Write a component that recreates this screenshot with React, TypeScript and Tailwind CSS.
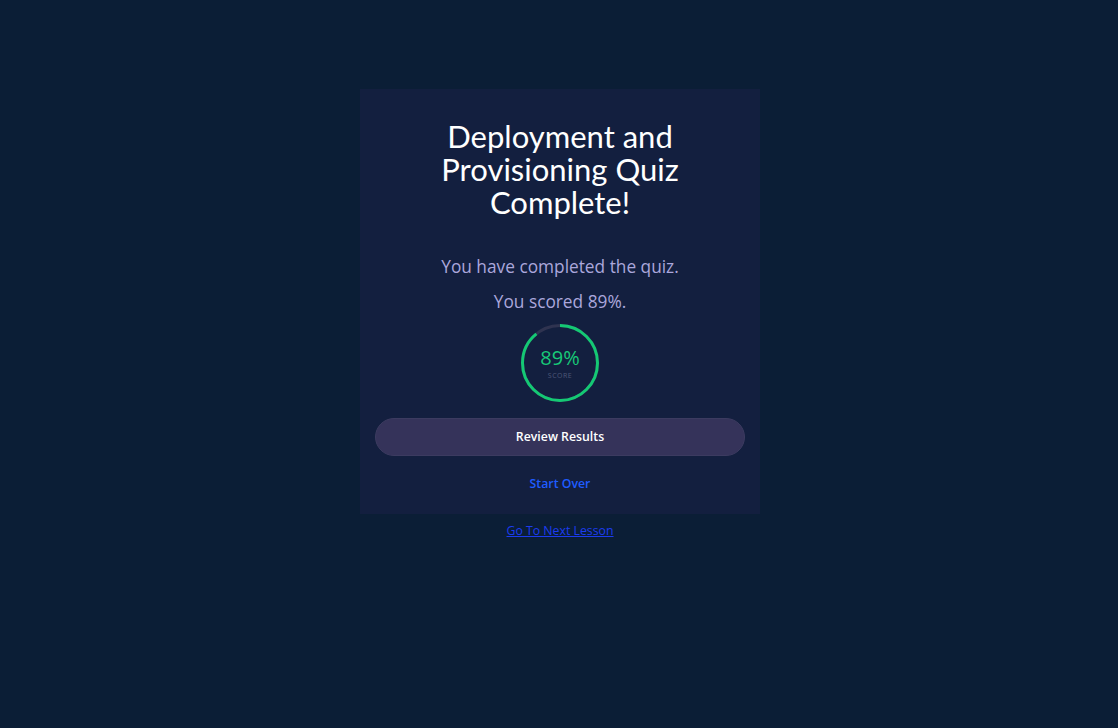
import React from "react";

const ScoreRing: React.FC<{ value: number }> = ({ value }) => {
  const r = 37.5;
  const c = 2 * Math.PI * r;
  return (
    <div className="relative w-[80px] h-[80px]">
      <svg width="80" height="80" viewBox="0 0 80 80" className="-rotate-90">
        <circle cx="40" cy="40" r={r} fill="none" stroke="#2f3350" strokeWidth="3" />
        <circle
          cx="40"
          cy="40"
          r={r}
          fill="none"
          stroke="#14c974"
          strokeWidth="3"
          strokeDasharray={`${(c * value) / 100} ${c}`}
        />
      </svg>
      <div className="absolute inset-0 flex flex-col items-center justify-center">
        <span className="text-[20px] leading-[22px] text-[#18c978] mt-[1px]">{value}%</span>
        <span className="text-[7px] leading-[10px] tracking-[0.5px] text-[#4e5878] mt-[2px]">SCORE</span>
      </div>
    </div>
  );
};

export default function App() {
  return (
    <div
      className="min-h-screen w-full bg-[#0b1e36] flex flex-col items-center pt-[89px] pl-[2px]"
      style={{ fontFamily: '"Open Sans", "Noto Sans", sans-serif' }}
    >
      <div className="w-[400px] bg-[#131f3f] flex flex-col items-center px-[15px] pt-[31px] pb-[20px]">
        <h1
          className="max-w-[270px] text-center text-white text-[31px] leading-[33px] font-normal"
          style={{ fontFamily: 'Lato, "Open Sans", sans-serif' }}
        >
          Deployment and Provisioning Quiz Complete!
        </h1>
        <p className="mt-[34px] text-[17.3px] leading-[27px] text-[#aba7dc]">You have completed the quiz.</p>
        <p className="mt-[8px] text-[17.3px] leading-[27px] text-[#aba7dc]">You scored 89%.</p>
        <div className="mt-[8px]">
          <ScoreRing value={89} />
        </div>
        <button className="mt-[15px] w-full h-[38px] rounded-full bg-[#35335a] border border-[#3c3b60] text-white text-[12.3px] font-semibold">
          Review Results
        </button>
        <a className="mt-[18px] text-[12.3px] leading-[20px] font-semibold text-[#1f5cff]">Start Over</a>
      </div>
      <a className="mt-[7px] text-[12.3px] leading-[20px] underline text-[#1c3cf0]">Go To Next Lesson</a>
    </div>
  );
}
